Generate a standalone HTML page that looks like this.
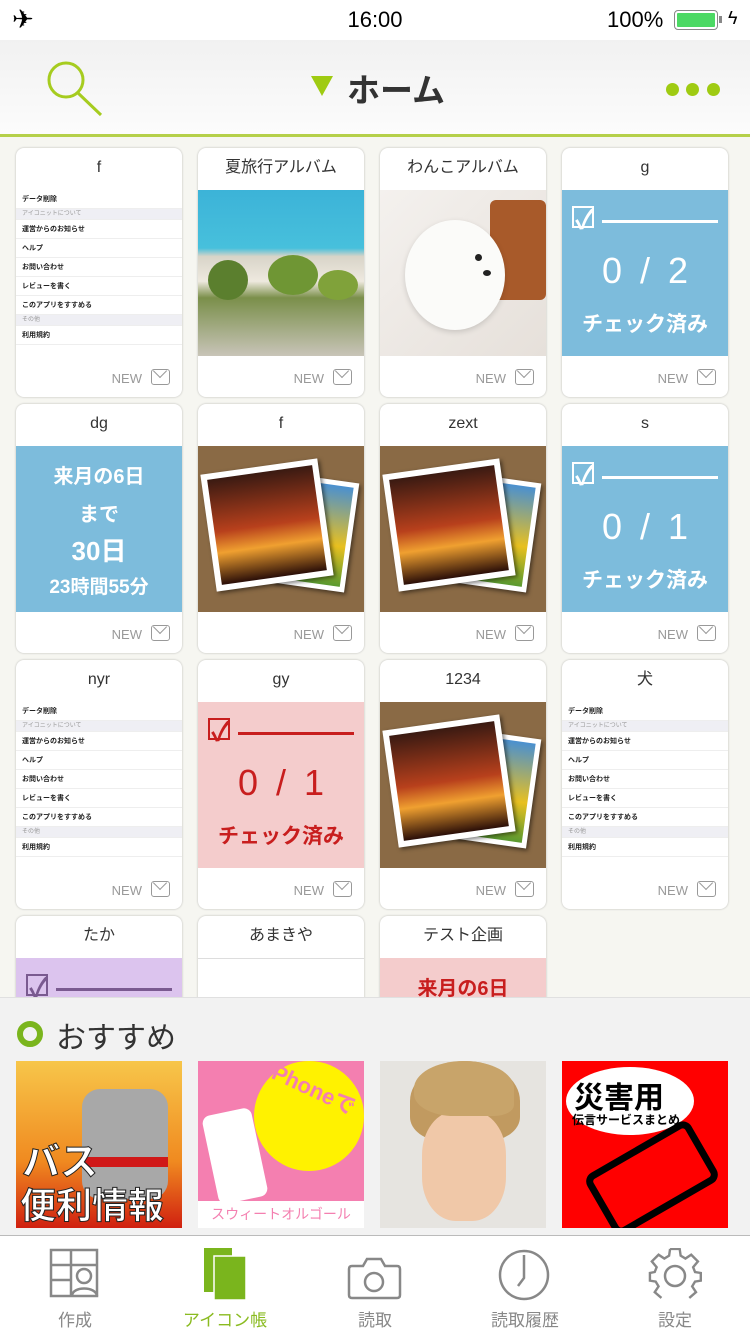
<!DOCTYPE html><html><head><meta charset="utf-8"><style>
*{margin:0;padding:0;box-sizing:border-box}
body{width:750px;height:1334px;overflow:hidden;position:relative;background:#f6f6f1;font-family:"Liberation Sans","Noto Sans CJK JP",sans-serif}
.a{position:absolute}
.card{position:absolute;width:166px;height:249px;background:#fff;border-radius:8px;box-shadow:0 0 2px rgba(0,0,0,.25);overflow:hidden}
.t{height:42px;line-height:40px;text-align:center;font-size:16px;color:#333}
.img{position:absolute;left:0;top:42px;width:166px;height:166px;overflow:hidden}
.ft{position:absolute;left:0;top:208px;width:166px;height:41px}
.new{position:absolute;right:40px;top:15px;font-size:13px;color:#999}
.env{position:absolute;right:12px;top:13px;width:19px;height:16px;border:1.5px solid #999;border-radius:3px}
.env:after{content:"";position:absolute;left:3px;top:-4px;width:9px;height:9px;border-right:1.5px solid #999;border-bottom:1.5px solid #999;transform:rotate(45deg)}
.set{background:#fff;font-size:7px;color:#222;font-weight:bold}
.set div{height:19px;line-height:19px;padding-left:6px;border-bottom:1px solid #eee}
.set .g{background:#efeff4;color:#999;font-weight:normal;height:11px;line-height:11px;font-size:6px}
.chk{color:#fff;text-align:center}
.n{word-spacing:8px}
.photo{background:#8a6a45}
.fr{position:absolute;background:#fff;box-shadow:2px 2px 4px rgba(0,0,0,.5)}
.tab{position:absolute;top:1306px;font-size:17px;color:#888;text-align:center;width:150px}
</style></head><body>
<div class="a" style="left:0;top:0;width:750px;height:40px;background:#fff"></div>
<div class="a" style="left:12px;top:4px;font-size:26px;color:#000">✈</div>
<div class="a" style="left:0;width:750px;top:7px;text-align:center;font-size:22px;color:#000">16:00</div>
<div class="a" style="left:607px;top:7px;font-size:22px;color:#000">100%</div>
<div class="a" style="left:674px;top:10px;width:44px;height:20px;border:1.5px solid #888;border-radius:4px;padding:2px"><div style="background:#4cd964;width:100%;height:100%;border-radius:1px"></div></div>
<div class="a" style="left:719px;top:16px;width:3px;height:7px;background:#888"></div>
<div class="a" style="left:728px;top:8px;font-size:18px;color:#000">ϟ</div>
<div class="a" style="left:0;top:40px;width:750px;height:95px;background:linear-gradient(#f1f1f1,#fcfcfc)"></div>
<div class="a" style="left:0;top:134px;width:750px;height:3px;background:#b5d04a"></div>
<svg class="a" style="left:44px;top:58px" width="62" height="62"><circle cx="22" cy="22" r="17" fill="none" stroke="#a6cc1f" stroke-width="3"/><line x1="34" y1="35" x2="57" y2="57" stroke="#a6cc1f" stroke-width="3"/></svg>
<svg class="a" style="left:311px;top:76px" width="22" height="22"><path d="M0 0H22L11 20Z" fill="#9fcb12"/></svg>
<div class="a" style="left:347px;top:64px;font-size:33px;font-weight:bold;color:#333">ホーム</div>
<div class="a" style="left:666px;top:83px;width:13px;height:13px;border-radius:50%;background:#9fcb12"></div>
<div class="a" style="left:686px;top:83px;width:13px;height:13px;border-radius:50%;background:#9fcb12"></div>
<div class="a" style="left:707px;top:83px;width:13px;height:13px;border-radius:50%;background:#9fcb12"></div>

<div class="card" style="left:16px;top:148px"><div class="t">f</div><div class="img set">
<div>データ削除</div><div class="g">アイコニットについて</div><div>運営からのお知らせ</div><div>ヘルプ</div><div>お問い合わせ</div><div>レビューを書く</div><div>このアプリをすすめる</div><div class="g">その他</div><div>利用規約</div></div>
<div class="ft"><span class="new">NEW</span><span class="env"></span></div></div>

<div class="card" style="left:198px;top:148px"><div class="t">夏旅行アルバム</div><div class="img" style="background:linear-gradient(#3cb3d8 0%,#47c0dc 35%,#d8d4c8 40%,#eee9df 55%,#7a8f4a 65%,#c8c4b8 100%)">
<div class="a" style="left:10px;top:70px;width:40px;height:40px;border-radius:50%;background:#5b7f2e"></div><div class="a" style="left:70px;top:65px;width:50px;height:40px;border-radius:50%;background:#6f9634"></div><div class="a" style="left:120px;top:80px;width:40px;height:30px;border-radius:50%;background:#80a23a"></div></div>
<div class="ft"><span class="new">NEW</span><span class="env"></span></div></div>

<div class="card" style="left:380px;top:148px"><div class="t">わんこアルバム</div><div class="img" style="background:linear-gradient(135deg,#f4f1ee,#e6e0da)">
<div class="a" style="left:110px;top:10px;width:56px;height:100px;background:#a85a2a;border-radius:6px"></div>
<div class="a" style="left:25px;top:30px;width:100px;height:110px;border-radius:50%;background:#fbfbf9;box-shadow:0 2px 6px rgba(0,0,0,.15)"></div>
<div class="a" style="left:95px;top:64px;width:7px;height:7px;border-radius:50%;background:#222"></div><div class="a" style="left:103px;top:80px;width:8px;height:6px;border-radius:50%;background:#222"></div></div>
<div class="ft"><span class="new">NEW</span><span class="env"></span></div></div>

<div class="card" style="left:562px;top:148px"><div class="t">g</div><div class="img chk" style="background:#7dbcdc">
<div class="a" style="left:10px;top:16px;width:22px;height:22px;border:2px solid #fff"></div><div class="a" style="left:13px;top:10px;font-size:26px;color:#fff;font-weight:bold">✓</div>
<div class="a" style="left:40px;top:30px;width:116px;height:3px;background:#fff"></div>
<div class="a n" style="left:0;width:166px;top:60px;font-size:36px">0 / 2</div>
<div class="a" style="left:0;width:166px;top:118px;font-size:21px;font-weight:bold">チェック済み</div></div>
<div class="ft"><span class="new">NEW</span><span class="env"></span></div></div>

<div class="card" style="left:16px;top:404px"><div class="t">dg</div><div class="img chk" style="background:#7dbcdc;font-weight:bold">
<div class="a" style="left:0;width:166px;top:14px;font-size:20px">来月の6日</div>
<div class="a" style="left:0;width:166px;top:52px;font-size:20px">まで</div>
<div class="a" style="left:0;width:166px;top:85px;font-size:26px">30日</div>
<div class="a" style="left:0;width:166px;top:126px;font-size:19px">23時間55分</div></div>
<div class="ft"><span class="new">NEW</span><span class="env"></span></div></div>

<div class="card" style="left:198px;top:404px"><div class="t">f</div><div class="img photo">
<div class="fr" style="left:82px;top:32px;width:72px;height:110px;transform:rotate(8deg);padding:5px"><div style="width:100%;height:100%;background:linear-gradient(#4a90d0,#e8c020 60%,#5a9a30)"></div></div>
<div class="fr" style="left:10px;top:20px;width:118px;height:118px;transform:rotate(-8deg);padding:6px"><div style="width:100%;height:100%;background:linear-gradient(#3a1a12,#b8401c 50%,#f0a030 70%,#2a0e08)"></div></div></div>
<div class="ft"><span class="new">NEW</span><span class="env"></span></div></div>

<div class="card" style="left:380px;top:404px"><div class="t">zext</div><div class="img photo">
<div class="fr" style="left:82px;top:32px;width:72px;height:110px;transform:rotate(8deg);padding:5px"><div style="width:100%;height:100%;background:linear-gradient(#4a90d0,#e8c020 60%,#5a9a30)"></div></div>
<div class="fr" style="left:10px;top:20px;width:118px;height:118px;transform:rotate(-8deg);padding:6px"><div style="width:100%;height:100%;background:linear-gradient(#3a1a12,#b8401c 50%,#f0a030 70%,#2a0e08)"></div></div></div>
<div class="ft"><span class="new">NEW</span><span class="env"></span></div></div>

<div class="card" style="left:562px;top:404px"><div class="t">s</div><div class="img chk" style="background:#7dbcdc">
<div class="a" style="left:10px;top:16px;width:22px;height:22px;border:2px solid #fff"></div><div class="a" style="left:13px;top:10px;font-size:26px;color:#fff;font-weight:bold">✓</div>
<div class="a" style="left:40px;top:30px;width:116px;height:3px;background:#fff"></div>
<div class="a n" style="left:0;width:166px;top:60px;font-size:36px">0 / 1</div>
<div class="a" style="left:0;width:166px;top:118px;font-size:21px;font-weight:bold">チェック済み</div></div>
<div class="ft"><span class="new">NEW</span><span class="env"></span></div></div>

<div class="card" style="left:16px;top:660px"><div class="t">nyr</div><div class="img set">
<div>データ削除</div><div class="g">アイコニットについて</div><div>運営からのお知らせ</div><div>ヘルプ</div><div>お問い合わせ</div><div>レビューを書く</div><div>このアプリをすすめる</div><div class="g">その他</div><div>利用規約</div></div>
<div class="ft"><span class="new">NEW</span><span class="env"></span></div></div>

<div class="card" style="left:198px;top:660px"><div class="t">gy</div><div class="img" style="background:#f4cccc;color:#c81e1e;text-align:center">
<div class="a" style="left:10px;top:16px;width:22px;height:22px;border:2px solid #c81e1e"></div><div class="a" style="left:13px;top:10px;font-size:26px;font-weight:bold">✓</div>
<div class="a" style="left:40px;top:30px;width:116px;height:3px;background:#c81e1e"></div>
<div class="a n" style="left:0;width:166px;top:60px;font-size:36px">0 / 1</div>
<div class="a" style="left:0;width:166px;top:118px;font-size:21px;font-weight:bold">チェック済み</div></div>
<div class="ft"><span class="new">NEW</span><span class="env"></span></div></div>

<div class="card" style="left:380px;top:660px"><div class="t">1234</div><div class="img photo">
<div class="fr" style="left:82px;top:32px;width:72px;height:110px;transform:rotate(8deg);padding:5px"><div style="width:100%;height:100%;background:linear-gradient(#4a90d0,#e8c020 60%,#5a9a30)"></div></div>
<div class="fr" style="left:10px;top:20px;width:118px;height:118px;transform:rotate(-8deg);padding:6px"><div style="width:100%;height:100%;background:linear-gradient(#3a1a12,#b8401c 50%,#f0a030 70%,#2a0e08)"></div></div></div>
<div class="ft"><span class="new">NEW</span><span class="env"></span></div></div>

<div class="card" style="left:562px;top:660px"><div class="t">犬</div><div class="img set">
<div>データ削除</div><div class="g">アイコニットについて</div><div>運営からのお知らせ</div><div>ヘルプ</div><div>お問い合わせ</div><div>レビューを書く</div><div>このアプリをすすめる</div><div class="g">その他</div><div>利用規約</div></div>
<div class="ft"><span class="new">NEW</span><span class="env"></span></div></div>

<div class="card" style="left:16px;top:916px"><div class="t">たか</div><div class="img" style="background:#dcc4ee">
<div class="a" style="left:10px;top:16px;width:22px;height:22px;border:2px solid #7a5a90"></div><div class="a" style="left:13px;top:10px;font-size:26px;font-weight:bold;color:#7a5a90">✓</div><div class="a" style="left:40px;top:30px;width:116px;height:3px;background:#7a5a90"></div></div></div>
<div class="card" style="left:198px;top:916px"><div class="t">あまきや</div><div class="img" style="border-top:1px solid #ddd"></div></div>
<div class="card" style="left:380px;top:916px"><div class="t">テスト企画</div><div class="img" style="background:#f4cccc;color:#c81e1e;text-align:center;font-weight:bold;font-size:20px;padding-top:14px">来月の6日</div></div>

<div class="a" style="left:0;top:997px;width:750px;height:240px;background:#f2f2f2;border-top:1px solid #e0e0e0"></div>
<div class="a" style="left:17px;top:1021px;width:26px;height:26px;border-radius:50%;border:6px solid #7ab51d"></div>
<div class="a" style="left:56px;top:1013px;font-size:30px;color:#333">おすすめ</div>
<div class="a" style="left:16px;top:1061px;width:166px;height:167px;background:linear-gradient(#f7c64a,#f08a20 60%,#d02010);overflow:hidden">
<div class="a" style="left:66px;top:28px;width:86px;height:110px;border-radius:18px;background:#a8a8a8"></div>
<div class="a" style="left:66px;top:96px;width:86px;height:10px;background:#d01818"></div>
<div class="a" style="left:6px;top:70px;font-size:38px;font-weight:bold;color:#fff;-webkit-text-stroke:1px #222">バス</div>
<div class="a" style="left:4px;top:116px;font-size:36px;font-weight:bold;color:#fff;-webkit-text-stroke:1px #222">便利情報</div></div>
<div class="a" style="left:198px;top:1061px;width:166px;height:167px;background:#f47fb0;overflow:hidden">
<div class="a" style="left:56px;top:0;width:110px;height:110px;border-radius:50%;background:#fff200"></div>
<div class="a" style="left:66px;top:10px;font-size:22px;font-weight:bold;color:#f47fb0;transform:rotate(25deg)">iPhoneで</div>
<div class="a" style="left:12px;top:50px;width:50px;height:90px;border-radius:8px;background:#fff;transform:rotate(-12deg)"></div>
<div class="a" style="left:0;top:140px;width:166px;height:27px;background:#fff;color:#f47fb0;font-size:14px;text-align:center;line-height:27px">スウィートオルゴール</div></div>
<div class="a" style="left:380px;top:1061px;width:166px;height:167px;background:#e6e4e0;overflow:hidden">
<div class="a" style="left:30px;top:0;width:110px;height:80px;border-radius:50% 50% 30% 30%;background:#c19a60"></div>
<div class="a" style="left:42px;top:50px;width:84px;height:110px;border-radius:40%;background:#f0c8a8"></div>
<div class="a" style="left:34px;top:0;width:100px;height:55px;border-radius:50% 50% 20% 40%;background:#c8a46a"></div></div>
<div class="a" style="left:562px;top:1061px;width:166px;height:167px;background:#ff0000;overflow:hidden">
<div class="a" style="left:4px;top:6px;width:128px;height:68px;border-radius:50%;background:#fff"></div>
<div class="a" style="left:12px;top:12px;font-size:30px;font-weight:bold;color:#000">災害用</div>
<div class="a" style="left:10px;top:50px;font-size:12px;font-weight:bold;color:#000">伝言サービスまとめ</div>
<div class="a" style="left:30px;top:82px;width:120px;height:70px;border:7px solid #000;border-radius:10px;transform:rotate(-30deg)"></div></div>

<div class="a" style="left:0;top:1235px;width:750px;height:99px;background:#fff;border-top:1px solid #bbb"></div>
<svg class="a" style="left:49px;top:1248px" width="52" height="52" fill="none" stroke="#888" stroke-width="2.5"><rect x="2" y="2" width="46" height="46"/><line x1="2" y1="17" x2="22" y2="17"/><line x1="22" y1="2" x2="22" y2="48"/><line x1="2" y1="32" x2="22" y2="32"/><line x1="22" y1="17" x2="48" y2="17"/><circle cx="35" cy="28" r="7"/><path d="M23 48C23 38 47 38 48 48"/></svg>
<svg class="a" style="left:204px;top:1248px" width="44" height="52"><rect x="0" y="0" width="28" height="44" fill="#7ab51d"/><rect x="10" y="8" width="32" height="44" fill="#7ab51d" stroke="#fff" stroke-width="1.5"/></svg>
<svg class="a" style="left:347px;top:1256px" width="56" height="44" fill="none" stroke="#888" stroke-width="2.5"><path d="M5 10H16L20 3H34L38 10H50Q53 10 53 13V39Q53 42 50 42H5Q2 42 2 39V13Q2 10 5 10Z"/><circle cx="27" cy="26" r="9"/></svg>
<svg class="a" style="left:497px;top:1248px" width="56" height="54" fill="none" stroke="#888" stroke-width="2.5"><ellipse cx="27" cy="27" rx="24" ry="24"/><path d="M27 7V30L21 38"/></svg>
<svg class="a" style="left:648px;top:1248px" width="54" height="54" fill="none" stroke="#888" stroke-width="2.5"><path d="M22 3H32L33 10L38 13L44 9L51 16L46 22L48 27L54 28V36L48 37L45 42L49 48L42 54M22 3L21 10L16 13L10 9L3 16L8 22L6 27L1 28V36L7 37L10 42L6 48L13 54" transform="scale(.96) translate(1,-2)"/><circle cx="27" cy="28" r="10"/></svg>
<div class="tab" style="left:0">作成</div>
<div class="tab" style="left:150px;color:#8abb20">アイコン帳</div>
<div class="tab" style="left:300px">読取</div>
<div class="tab" style="left:450px">読取履歴</div>
<div class="tab" style="left:600px">設定</div>
</body></html>
